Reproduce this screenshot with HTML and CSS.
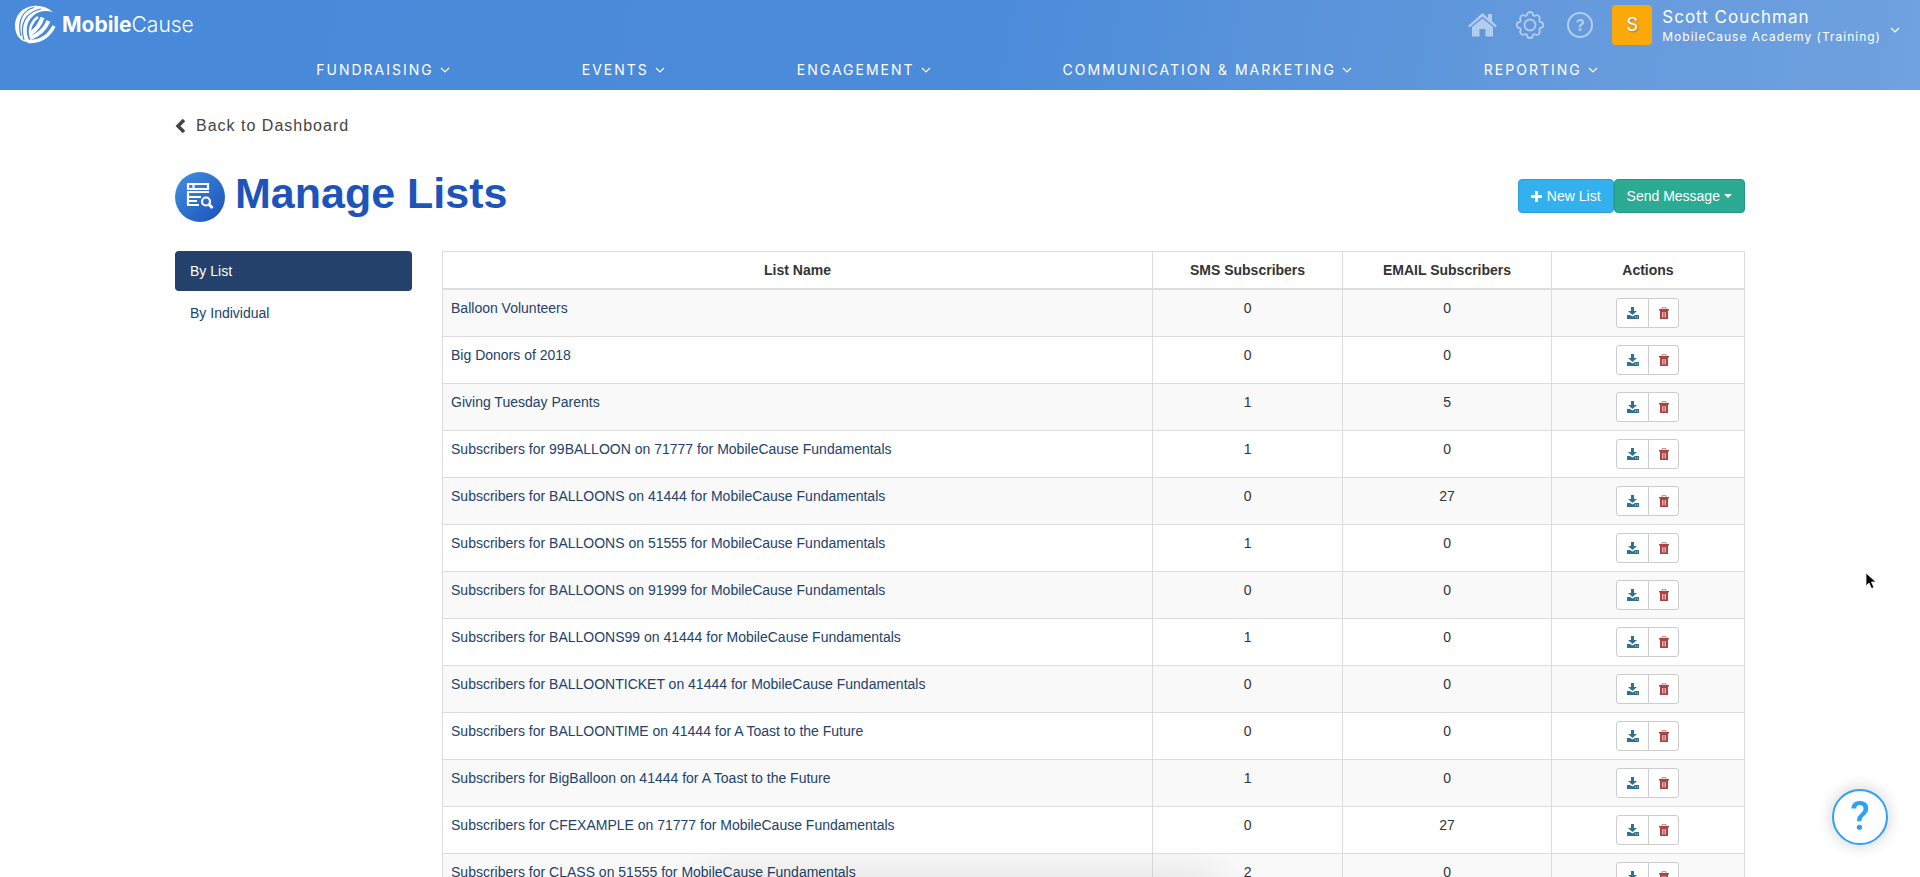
FILE: index.html
```
<!DOCTYPE html>
<html lang="en">
<head>
  <meta charset="UTF-8">
  <meta name="viewport" content="width=device-width, initial-scale=1.0">
  <title>Manage Lists</title>
  <link rel="stylesheet" href="styles.css">
</head>
<body>

  <!-- shared icons -->
  <svg class="sprite" aria-hidden="true">
    <symbol id="chevron" viewBox="0 0 10 6"><path d="M1 1l4 4 4-4" fill="none" stroke="currentColor" stroke-width="1.2"/></symbol>
    <symbol id="download" viewBox="0 0 12 12"><path d="M4 0h3v4h3L5.500 8 1 4h3zM0 8h3l2.500 1.500L8 8h4v4H0z" fill="currentColor"/><path d="M8 10h1M10 10h1" stroke="#fff" stroke-width="0.8"/></symbol>
    <symbol id="trash" viewBox="0 0 10 12"><path d="M3 2V.6h4V2" fill="none" stroke="currentColor" opacity=".6"/><path d="M0 2h10v1.500H0zM1 3.500h8V12H1z" fill="currentColor"/><path d="M3.500 5v5.500M5 5v5.500M6.500 5v5.500" stroke="#fff" stroke-width=".6"/></symbol>
  </svg>

  <header class="header">
    <div class="topbar">
      <a class="logo" href="#">
        <svg class="logo-mark" viewBox="0 0 42 40" aria-hidden="true">
          <path d="M39 7C33 2 26 0 19 1 8 2 1 11 1 20c0 8 3 13 8 16l8 2.500C11 30 11 18 19 11c5-5 12-6 20-4z" fill="#fff"/>
          <g fill="none" stroke="#4889d9" stroke-width="1.200">
            <path d="M20 2.500C9 5 3 16 7 31"/>
            <path d="M27 4C12 7 5 19 10 35"/>
          </g>
          <g fill="none" stroke="#fff">
            <path d="M24 12c-6 4-10 12-7 20" stroke-width="2.500"/>
            <path d="M28.500 12.500C26 20 22 25 16 29" stroke-width="4"/>
            <path d="M34.500 16C31 24 25 30 16 33" stroke-width="4"/>
            <path d="M40 21C35 31 27 37 14 36.500" stroke-width="3.500"/>
          </g>
        </svg>
        <span class="logo-text"><b>Mobile</b>Cause</span>
      </a>
      <div class="tools">
        <a class="tool" href="#" aria-label="Home">
          <svg width="29" height="24" viewBox="0 0 29 24"><path d="M20 1h4v7l5 5-1.500 1.500L14.500 3.500 1.500 14.500 0 13 14.500 0 20 5z" fill="currentColor"/><path d="M4 14L14.500 5.500 25 14v9.500h-7.500V16h-6v7.500H4z" fill="currentColor"/></svg>
        </a>
        <a class="tool" href="#" aria-label="Settings">
          <svg width="28" height="28" viewBox="0 0 28 28" fill="none" stroke="currentColor" stroke-width="1.800"><path d="M11 4a3 3 0 0 1 6 0q1 1.500 2.500.5a3 3 0 0 1 4 4q-.5 2 .8 2.500a3 3 0 0 1 0 6q-1.300.5-.8 2.500a3 3 0 0 1-4 4q-1.500-1-2.500.5a3 3 0 0 1-6 0q-1-1.500-2.500-.5a3 3 0 0 1-4-4q.5-2-.8-2.500a3 3 0 0 1 0-6q1.300-.5.8-2.500a3 3 0 0 1 4-4Q10 5.500 11 4z"/><circle cx="14" cy="14" r="5.500"/></svg>
        </a>
        <a class="tool" href="#" aria-label="Help">
          <span class="help-ring">?</span>
        </a>
        <button class="account" type="button">
          <span class="avatar">S</span>
          <span class="account-text">
            <span class="account-name">Scott Couchman</span>
            <span class="account-org">MobileCause Academy (Training)</span>
          </span>
          <svg class="chevron"><use href="#chevron"/></svg>
        </button>
      </div>
    </div>
    <nav class="nav">
      <a href="#">FUNDRAISING <svg class="chevron"><use href="#chevron"/></svg></a>
      <a href="#">EVENTS <svg class="chevron"><use href="#chevron"/></svg></a>
      <a href="#">ENGAGEMENT <svg class="chevron"><use href="#chevron"/></svg></a>
      <a href="#">COMMUNICATION &amp; MARKETING <svg class="chevron"><use href="#chevron"/></svg></a>
      <a href="#">REPORTING <svg class="chevron"><use href="#chevron"/></svg></a>
    </nav>
  </header>

  <main class="page">
    <a class="back" href="#">
      <svg width="11" height="16" viewBox="0 0 11 16" aria-hidden="true"><path d="M9 2L3 8l6 6" fill="none" stroke="currentColor" stroke-width="3.500"/></svg>
      Back to Dashboard
    </a>

    <div class="title-row">
      <svg class="title-icon" viewBox="0 0 50 50" aria-hidden="true">
        <defs><linearGradient id="disc" x1="0" y1="0" x2="1" y2="1"><stop offset="0" stop-color="#4291e2"/><stop offset="1" stop-color="#1b4fb8"/></linearGradient></defs>
        <circle cx="25" cy="25" r="25" fill="url(#disc)"/>
        <g fill="none" stroke="#fff" stroke-width="2.200">
          <path d="M13 12h20v5H13zM18.500 12v5M12 20h22M13 20v13.500M13 25h13M13 29h9M12 33h12"/>
          <circle cx="31" cy="29.500" r="4"/>
          <path d="M34 32.500l3.500 3.500" stroke-width="3"/>
        </g>
      </svg>
      <h1>Manage Lists</h1>
      <div class="title-actions">
        <button class="btn btn-new" type="button"><svg width="11" height="11" viewBox="0 0 11 11" aria-hidden="true"><path d="M5.500 0v11M0 5.500h11" stroke="#fff" stroke-width="3"/></svg> New List</button>
        <button class="btn btn-send" type="button">Send Message <span class="caret"></span></button>
      </div>
    </div>

    <div class="columns">
      <nav class="sidebar">
        <a class="active" href="#">By List</a>
        <a href="#">By Individual</a>
      </nav>

      <table class="lists">
        <thead>
          <tr>
            <th class="col-name">List Name</th>
            <th class="col-sms">SMS Subscribers</th>
            <th class="col-email">EMAIL Subscribers</th>
            <th>Actions</th>
          </tr>
        </thead>
        <tbody id="listRows"></tbody>
      </table>
    </div>
  </main>

  <button class="help-button" type="button" aria-label="Help">?</button>
  <svg class="cursor" viewBox="0 0 12 18" aria-hidden="true"><path d="M1 1v13l3-3 2.500 5.500 2.500-1L6.500 10H11z" fill="#000" stroke="#fff" stroke-width=".8"/></svg>
  <div class="dock-shadow"></div>

  <script>
    // name, sms subscribers, email subscribers
    const lists = [
      ["Balloon Volunteers", 0, 0],
      ["Big Donors of 2018", 0, 0],
      ["Giving Tuesday Parents", 1, 5],
      ["Subscribers for 99BALLOON on 71777 for MobileCause Fundamentals", 1, 0],
      ["Subscribers for BALLOONS on 41444 for MobileCause Fundamentals", 0, 27],
      ["Subscribers for BALLOONS on 51555 for MobileCause Fundamentals", 1, 0],
      ["Subscribers for BALLOONS on 91999 for MobileCause Fundamentals", 0, 0],
      ["Subscribers for BALLOONS99 on 41444 for MobileCause Fundamentals", 1, 0],
      ["Subscribers for BALLOONTICKET on 41444 for MobileCause Fundamentals", 0, 0],
      ["Subscribers for BALLOONTIME on 41444 for A Toast to the Future", 0, 0],
      ["Subscribers for BigBalloon on 41444 for A Toast to the Future", 1, 0],
      ["Subscribers for CFEXAMPLE on 71777 for MobileCause Fundamentals", 0, 27],
      ["Subscribers for CLASS on 51555 for MobileCause Fundamentals", 2, 0]
    ];

    document.getElementById("listRows").innerHTML = lists.map(([name, sms, email]) => `
      <tr>
        <td><a href="#">${name}</a></td>
        <td class="count">${sms}</td>
        <td class="count">${email}</td>
        <td class="count">
          <div class="btn-group">
            <button class="icon-btn download" type="button" aria-label="Download"><svg width="12" height="12"><use href="#download"/></svg></button>
            <button class="icon-btn trash" type="button" aria-label="Delete"><svg width="10" height="12"><use href="#trash"/></svg></button>
          </div>
        </td>
      </tr>`).join('');
  </script>

</body>
</html>
```

FILE: styles.css
```
* { box-sizing: border-box; }
html { height: 100%; }
body { margin: 0; height: 100%; overflow: hidden; font: 14px/20px "Liberation Sans", Arial, sans-serif; color: #333; background: #fff; }
a { color: #23416b; text-decoration: none; }
button { font: inherit; cursor: pointer; }
.sprite { display: none; }
.chevron { width: 10px; height: 6px; flex: none; }

/* header */
.header { height: 90px; color: #fff; font-family: Inter, sans-serif; background: linear-gradient(100deg, #4889d9 0%, #4b8bda 50%, #659adc 82%, #70a1e0 100%); }
.header a { color: #fff; }
.topbar { display: flex; justify-content: space-between; height: 50px; padding: 0 20px 0 14px; }
.logo { display: flex; align-items: center; gap: 6px; }
.logo-mark { width: 42px; height: 40px; }
.logo-text { font-size: 21px; font-weight: 300; line-height: 24px; }
.logo-text b { font-weight: 700; }
.tools { display: flex; align-items: center; }
.header .tool { display: flex; color: #b3cdee; margin-right: 19px; }
.help-ring { width: 26px; height: 26px; margin-left: 4px; border: 2px solid #b3cdee; border-radius: 50%; font-size: 16px; font-weight: 700; line-height: 22px; text-align: center; }
.account { display: flex; align-items: center; padding: 0; border: 0; background: none; color: #fff; text-align: left; }
.avatar { width: 40px; height: 40px; margin-right: 10px; border-radius: 4px; background: #fba90a; font-size: 18px; line-height: 40px; text-align: center; text-shadow: 1px 1px 2px #777; }
.account-text { display: flex; flex-direction: column; margin-right: 9px; padding-top: 3px; }
.account-name { font-size: 17px; letter-spacing: 1px; }
.account-org { font-size: 12px; letter-spacing: 1px; }
.account .chevron { margin-top: 10px; }
.nav { display: flex; justify-content: center; gap: 132px; height: 40px; padding-right: 6px; font-size: 14px; letter-spacing: 2px; line-height: 40px; }
.nav a { display: flex; align-items: center; gap: 6px; white-space: nowrap; }

/* page */
.page { width: 83.33%; margin: 0 auto; padding: 26px 15px 0; }
.back { display: flex; align-items: center; gap: 10px; width: max-content; height: 20px; color: #444; font-size: 16px; letter-spacing: 1px; }
.title-row { display: flex; align-items: center; margin: 36px 0 29px; }
.title-icon { width: 50px; height: 50px; margin-right: 10px; }
h1 { margin: 0; padding-bottom: 8px; color: #1d54ba; font-size: 43px; line-height: 42px; }
.title-actions { display: flex; margin-left: auto; padding-bottom: 2px; }
.btn { display: flex; align-items: center; gap: 4px; height: 34px; padding: 0 12px; border: 1px solid; border-radius: 4px; color: #fff; }
.btn-new { gap: 5px; background: #33b0ee; border-color: #2a9ddb; }
.btn-send { background: #2bab94; border-color: #259580; }
.caret { border: 4px solid transparent; border-top-color: #fff; border-bottom: 0; }

.columns { display: grid; grid-template-columns: 237px 1fr; gap: 30px; align-items: start; }
.sidebar { display: flex; flex-direction: column; gap: 2px; }
.sidebar a { padding: 10px 15px; border-radius: 4px; }
.sidebar .active { color: #fff; background: #23416b; }

.lists { width: 100%; border-collapse: collapse; table-layout: fixed; }
.lists th, .lists td { border: 1px solid #ddd; padding: 8px; vertical-align: top; }
.lists th { border-bottom-width: 2px; text-align: center; }
.lists tbody tr:nth-child(odd) { background: #f9f9f9; }
.col-name { width: 710px; }
.col-sms { width: 190px; }
.col-email { width: 209px; }
.lists .count { text-align: center; }
.btn-group { display: flex; justify-content: center; }
.icon-btn { display: flex; align-items: center; justify-content: center; width: 33px; height: 30px; padding: 0; border: 1px solid #ccc; background: #fff; }
.download { color: #31708f; border-radius: 3px 0 0 3px; }
.trash { width: 31px; margin-left: -1px; color: #a94442; border-radius: 0 3px 3px 0; }

/* things floating over the page */
.help-button { position: fixed; right: 32px; bottom: 32px; width: 56px; height: 56px; padding: 0; border: 2px solid #2fa1f2; border-radius: 50%; background: #fff; color: #2fa1f2; font: 500 40px/52px Roboto, sans-serif; box-shadow: 0 0 16px rgba(0, 0, 0, 0.2); }
.cursor { position: fixed; left: 1865px; top: 572px; width: 12px; height: 18px; }
.dock-shadow { position: fixed; left: 700px; bottom: -30px; width: 520px; height: 30px; box-shadow: 0 0 40px rgba(0, 0, 0, 0.12); }
```
